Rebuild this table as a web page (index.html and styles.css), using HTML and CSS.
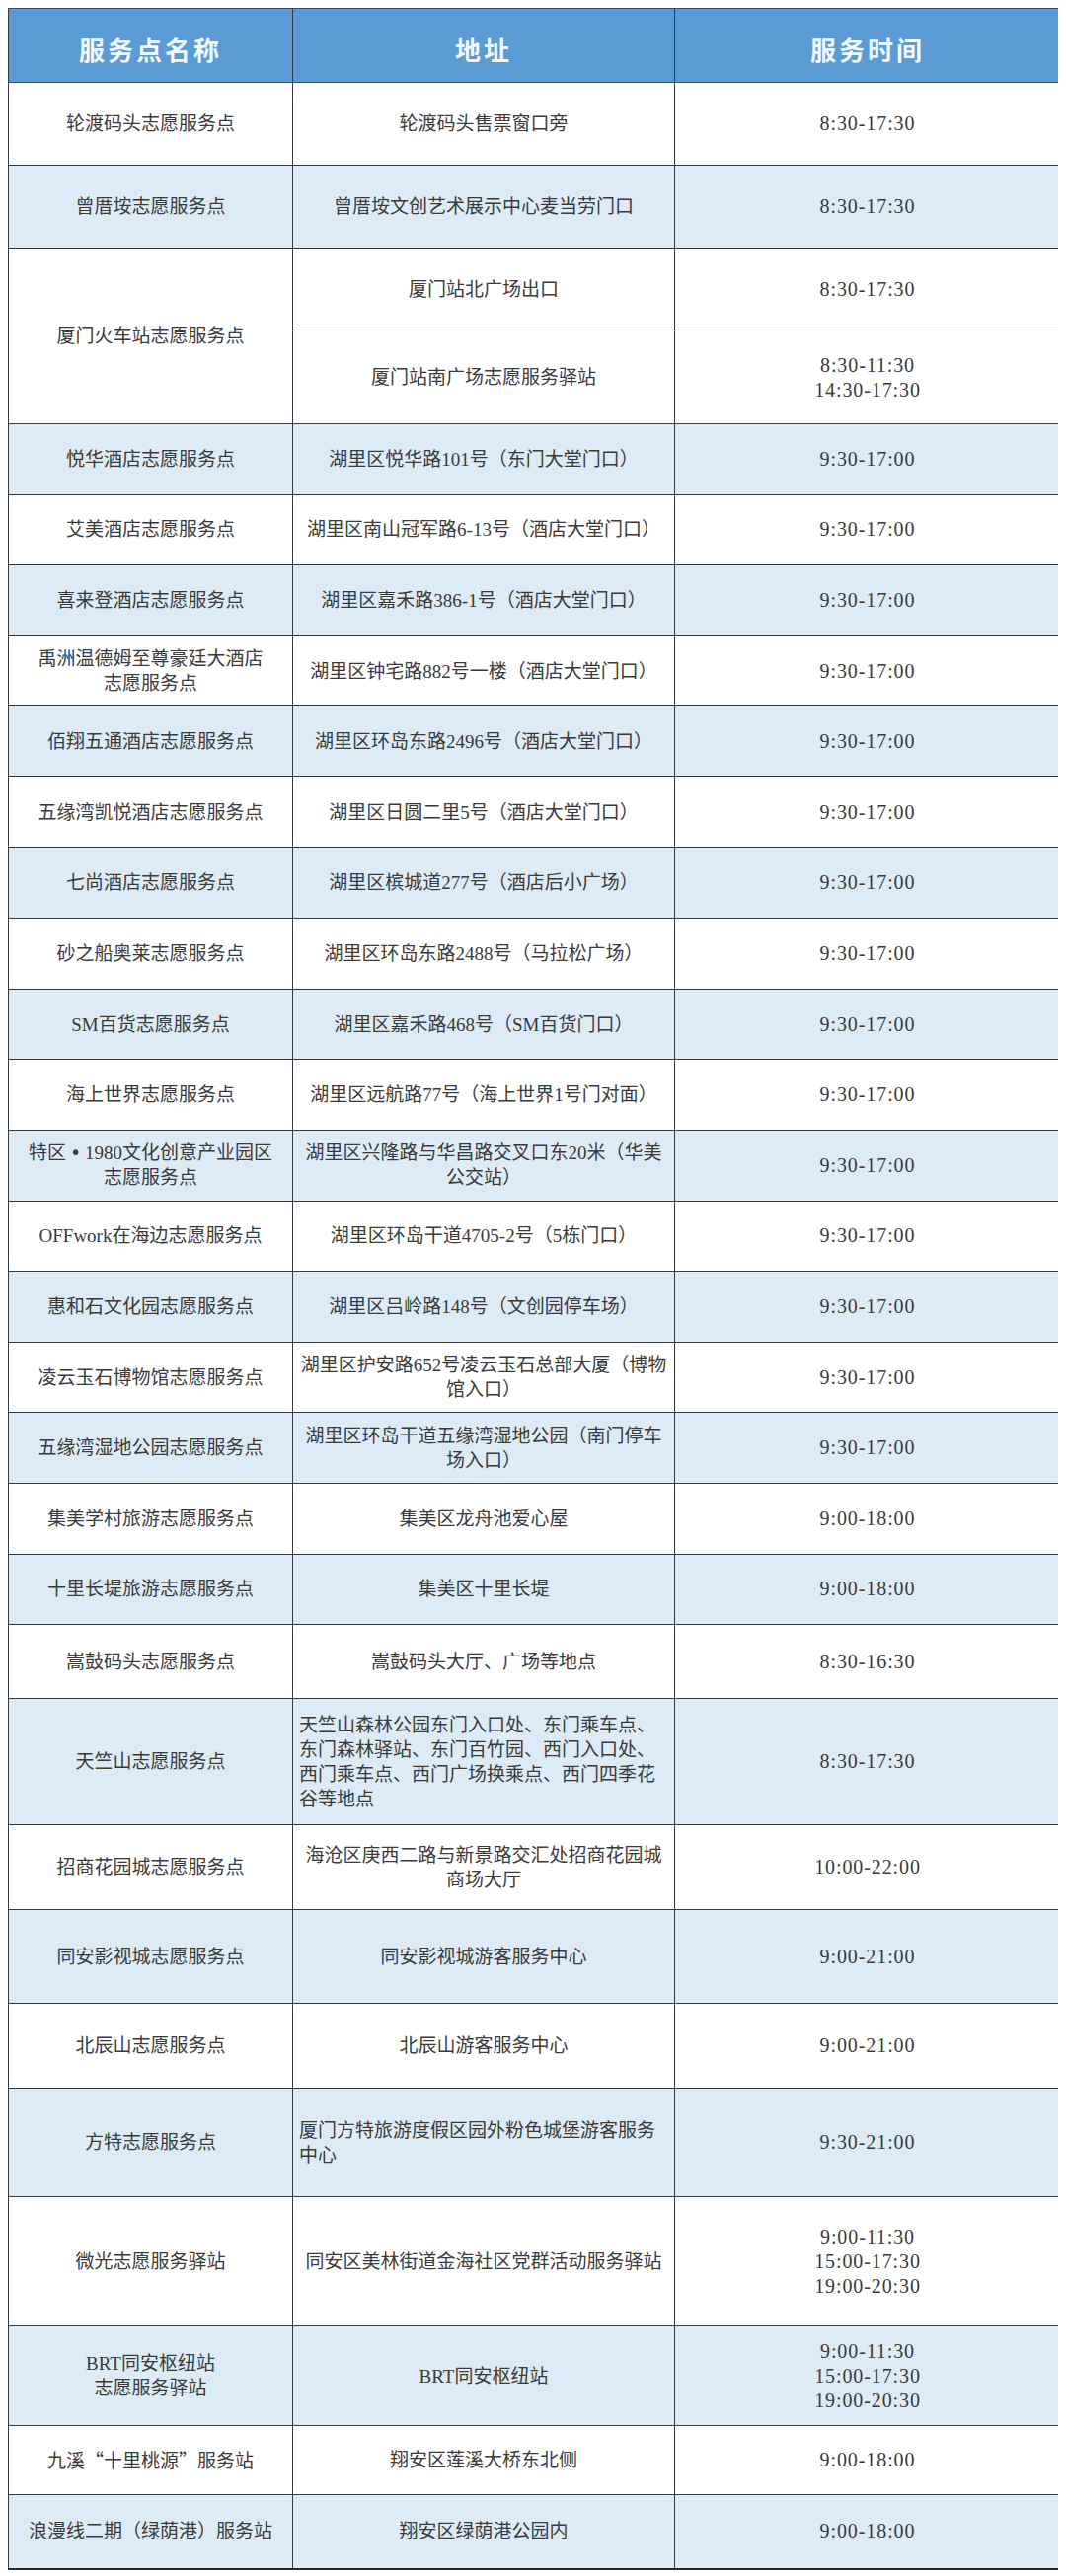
FILE: index.html
```html
<!DOCTYPE html>
<html lang="zh-CN">
<head>
<meta charset="utf-8">
<title>志愿服务点</title>
<link rel="stylesheet" href="styles.css">
</head>
<body>
<table class="sheet">
  <colgroup>
    <col class="c-name">
    <col class="c-addr">
    <col class="c-time">
  </colgroup>
  <thead>
    <tr class="head">
      <th>服务点名称</th>
      <th>地址</th>
      <th>服务时间</th>
    </tr>
  </thead>
  <tbody>
    <tr class="h84"><td>轮渡码头志愿服务点</td><td>轮渡码头售票窗口旁</td><td>8:30-17:30</td></tr>
    <tr class="h84 alt"><td>曾厝垵志愿服务点</td><td>曾厝垵文创艺术展示中心麦当劳门口</td><td>8:30-17:30</td></tr>
    <tr class="h84"><td rowspan="2">厦门火车站志愿服务点</td><td>厦门站北广场出口</td><td>8:30-17:30</td></tr>
    <tr class="h94"><td>厦门站南广场志愿服务驿站</td><td>8:30-11:30<br>14:30-17:30</td></tr>
    <tr class="alt"><td>悦华酒店志愿服务点</td><td>湖里区悦华路101号（东门大堂门口）</td><td>9:30-17:00</td></tr>
    <tr><td>艾美酒店志愿服务点</td><td>湖里区南山冠军路6-13号（酒店大堂门口）</td><td>9:30-17:00</td></tr>
    <tr class="alt"><td>喜来登酒店志愿服务点</td><td>湖里区嘉禾路386-1号（酒店大堂门口）</td><td>9:30-17:00</td></tr>
    <tr><td>禹洲温德姆至尊豪廷大酒店<br>志愿服务点</td><td>湖里区钟宅路882号一楼（酒店大堂门口）</td><td>9:30-17:00</td></tr>
    <tr class="alt"><td>佰翔五通酒店志愿服务点</td><td>湖里区环岛东路2496号（酒店大堂门口）</td><td>9:30-17:00</td></tr>
    <tr><td>五缘湾凯悦酒店志愿服务点</td><td>湖里区日圆二里5号（酒店大堂门口）</td><td>9:30-17:00</td></tr>
    <tr class="alt"><td>七尚酒店志愿服务点</td><td>湖里区槟城道277号（酒店后小广场）</td><td>9:30-17:00</td></tr>
    <tr><td>砂之船奥莱志愿服务点</td><td>湖里区环岛东路2488号（马拉松广场）</td><td>9:30-17:00</td></tr>
    <tr class="alt"><td>SM百货志愿服务点</td><td>湖里区嘉禾路468号（SM百货门口）</td><td>9:30-17:00</td></tr>
    <tr><td>海上世界志愿服务点</td><td>湖里区远航路77号（海上世界1号门对面）</td><td>9:30-17:00</td></tr>
    <tr class="alt"><td>特区<span class="dot">•</span>1980文化创意产业园区<br>志愿服务点</td><td>湖里区兴隆路与华昌路交叉口东20米（华美<br>公交站）</td><td>9:30-17:00</td></tr>
    <tr><td>OFFwork在海边志愿服务点</td><td>湖里区环岛干道4705-2号（5栋门口）</td><td>9:30-17:00</td></tr>
    <tr class="alt"><td>惠和石文化园志愿服务点</td><td>湖里区吕岭路148号（文创园停车场）</td><td>9:30-17:00</td></tr>
    <tr><td>凌云玉石博物馆志愿服务点</td><td>湖里区护安路652号凌云玉石总部大厦（博物<br>馆入口）</td><td>9:30-17:00</td></tr>
    <tr class="alt"><td>五缘湾湿地公园志愿服务点</td><td>湖里区环岛干道五缘湾湿地公园（南门停车<br>场入口）</td><td>9:30-17:00</td></tr>
    <tr><td>集美学村旅游志愿服务点</td><td>集美区龙舟池爱心屋</td><td>9:00-18:00</td></tr>
    <tr class="alt"><td>十里长堤旅游志愿服务点</td><td>集美区十里长堤</td><td>9:00-18:00</td></tr>
    <tr class="h75"><td>嵩鼓码头志愿服务点</td><td>嵩鼓码头大厅、广场等地点</td><td>8:30-16:30</td></tr>
    <tr class="h128 alt"><td>天竺山志愿服务点</td><td class="left">天竺山森林公园东门入口处、东门乘车点、<br>东门森林驿站、东门百竹园、西门入口处、<br>西门乘车点、西门广场换乘点、西门四季花<br>谷等地点</td><td>8:30-17:30</td></tr>
    <tr class="h86"><td>招商花园城志愿服务点</td><td>海沧区庚西二路与新景路交汇处招商花园城<br>商场大厅</td><td>10:00-22:00</td></tr>
    <tr class="h95 alt"><td>同安影视城志愿服务点</td><td>同安影视城游客服务中心</td><td>9:00-21:00</td></tr>
    <tr class="h86"><td>北辰山志愿服务点</td><td>北辰山游客服务中心</td><td>9:00-21:00</td></tr>
    <tr class="h110 alt"><td>方特志愿服务点</td><td class="left">厦门方特旅游度假区园外粉色城堡游客服务<br>中心</td><td>9:30-21:00</td></tr>
    <tr class="h131"><td>微光志愿服务驿站</td><td>同安区美林街道金海社区党群活动服务驿站</td><td>9:00-11:30<br>15:00-17:30<br>19:00-20:30</td></tr>
    <tr class="h101 alt"><td>BRT同安枢纽站<br>志愿服务驿站</td><td>BRT同安枢纽站</td><td>9:00-11:30<br>15:00-17:30<br>19:00-20:30</td></tr>
    <tr class="h70"><td>九溪<span class="cjk">“十里桃源”</span>服务站</td><td>翔安区莲溪大桥东北侧</td><td>9:00-18:00</td></tr>
    <tr class="h75 alt last"><td>浪漫线二期（绿荫港）服务站</td><td>翔安区绿荫港公园内</td><td>9:00-18:00</td></tr>
  </tbody>
</table>
</body>
</html>
```

FILE: styles.css
```css
html, body {
  background: #ffffff;
}

body {
  margin: 8px;
}

.sheet {
  width: 1066px;
  table-layout: fixed;
  border-collapse: collapse;
  font-family: "Liberation Serif", "Noto Sans CJK SC", serif;
  font-size: 19px;
  line-height: 25px;
  color: #3a3a3a;
}

.c-name { width: 288px; }
.c-addr { width: 387px; }
.c-time { width: 391px; }

.sheet th,
.sheet td {
  border: 1px solid #353a40;
  text-align: center;
  vertical-align: middle;
  white-space: nowrap;
  padding: 0 4px;
  overflow: hidden;
}

.head {
  height: 75px;
  background: #5b9bd5;
}

.head th {
  font-family: "Noto Sans CJK SC", "Noto Sans", sans-serif;
  font-weight: 700;
  font-size: 26px;
  letter-spacing: 3px;
  color: #f4f8fc;
  padding-top: 6px;
  border-color: #2f4f6e #353a40;
}

.sheet tbody tr {
  height: 71.6px;
  background: #ffffff;
}

.sheet tbody tr.alt {
  background: #ddebf7;
}

.sheet tbody tr.h70 { height: 70px; }
.sheet tbody tr.h75 { height: 75px; }
.sheet tbody tr.h84 { height: 84px; }
.sheet tbody tr.h86 { height: 86px; }
.sheet tbody tr.h94 { height: 94px; }
.sheet tbody tr.h95 { height: 95px; }
.sheet tbody tr.h101 { height: 101px; }
.sheet tbody tr.h110 { height: 110px; }
.sheet tbody tr.h128 { height: 128px; }
.sheet tbody tr.h131 { height: 131px; }

.sheet tbody td:last-child {
  font-size: 20px;
  letter-spacing: 0.9px;
}

.sheet tr.last td {
  border-bottom: 2px solid #25292e;
}

.sheet td.left {
  text-align: left;
  padding-left: 6px;
}

.dot {
  font-family: "DejaVu Sans", sans-serif;
  padding: 0 4px;
}

.cjk {
  font-family: "Noto Sans CJK SC", sans-serif;
}
```
